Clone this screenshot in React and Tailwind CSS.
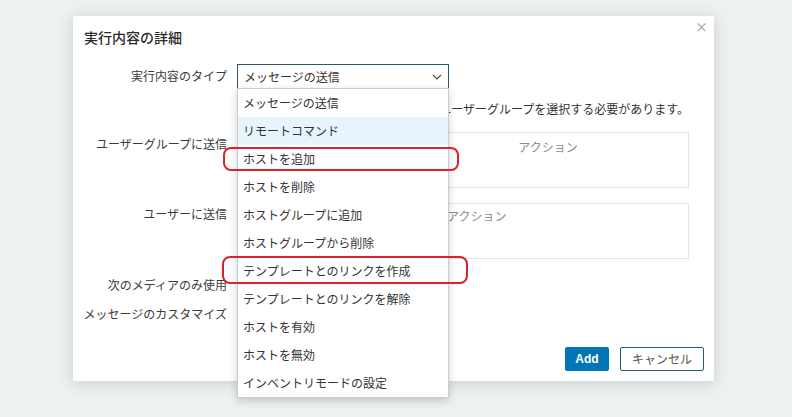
import React from 'react'

const options = [
  'メッセージの送信',
  'リモートコマンド',
  'ホストを追加',
  'ホストを削除',
  'ホストグループに追加',
  'ホストグループから削除',
  'テンプレートとのリンクを作成',
  'テンプレートとのリンクを解除',
  'ホストを有効',
  'ホストを無効',
  'インベントリモードの設定',
]

function Label({ children, className = '' }) {
  return <div className={`text-right text-[12px] leading-[16px] text-[#3b3b3b] ${className}`}>{children}</div>
}

function Chevron() {
  return (
    <svg viewBox="0 0 10 6" className="h-[6px] w-[10px]" fill="none" stroke="#4a4a4a" strokeWidth="1.1">
      <path d="M1 1l4 4 4-4" />
    </svg>
  )
}

export default function App() {
  return (
    <div
      className="relative h-[417px] w-[792px] overflow-hidden bg-[#eef1f1] pl-[73px] pt-[16px]"
      style={{ fontFamily: '"Noto Sans CJK JP", "Noto Sans", sans-serif' }}
    >
      <div className="relative h-[365px] w-[641px] bg-white shadow-[0_2px_14px_rgba(60,80,90,0.22)]">
        <button className="absolute right-[6px] top-[4px] text-[13px] leading-[14px] font-bold text-[#b4b4b4]">×</button>

        <div className="px-[11px] pt-[11px] text-[14px] font-medium leading-[20px] text-[#2b2b2b]">実行内容の詳細</div>

        <div className="mt-[17px] grid grid-cols-[154px_1fr] gap-x-[10px] pr-[25px]">
          <Label className="pt-[4px]">実行内容のタイプ</Label>
          <div className="relative z-10">
            <div className="flex h-[25px] w-[212px] items-center justify-between border border-[#2f5566] bg-white pl-[6px] pr-[6px] text-[12px] text-[#333]">
              <span>メッセージの送信</span>
              <Chevron />
            </div>
            <ul className="absolute left-0 top-[24px] w-[212px] border border-[#c9cdd0] bg-white shadow-[0_3px_8px_rgba(0,0,0,0.18)]">
              {options.map((o, i) => (
                <li
                  key={o}
                  className={`flex h-[28px] items-center pl-[5px] text-[12px] text-[#333] ${i === 1 ? 'bg-[#e8f4fb]' : ''}`}
                >
                  {o}
                </li>
              ))}
            </ul>
          </div>

          <div className="mt-[8px] h-[24px]" />
          <div className="mt-[8px] ml-[211px] flex h-[24px] items-center justify-end overflow-hidden whitespace-nowrap text-[12px] text-[#333]">
            ユーザーグループを選択する必要があります。
          </div>

          <Label className="mt-[11px] pt-[4px]">ユーザーグループに送信</Label>
          <div className="mt-[11px] flex h-[56px] border border-[#e3e5e6] text-[12px] text-[#8b8b8b]">
            <div className="w-[170px]" />
            <div className="flex-1 pt-[5px] text-center">アクション</div>
          </div>

          <Label className="mt-[15px] pt-[3px]">ユーザーに送信</Label>
          <div className="mt-[15px] flex h-[56px] border border-[#e3e5e6] text-[12px] text-[#8b8b8b]">
            <div className="w-[209px]" />
            <div className="flex-1 pt-[3px]">アクション</div>
          </div>

          <Label className="mt-[18px]">次のメディアのみ使用</Label>
          <div className="mt-[18px] h-[16px]" />

          <Label className="mt-[13px]">メッセージのカスタマイズ</Label>
          <div className="mt-[13px] h-[16px]" />
        </div>

        <div className="absolute bottom-[10px] right-[10px] flex gap-[11px]">
          <button className="h-[24px] w-[44px] rounded-[2px] bg-[#0275b8] text-[12px] font-bold text-white" style={{ fontFamily: '"Liberation Sans", Arial, sans-serif' }}>
            Add
          </button>
          <button className="h-[24px] w-[84px] rounded-[2px] border border-[#2c5a6e] bg-white text-[12px] text-[#555]">
            キャンセル
          </button>
        </div>
      </div>

      <div className="pointer-events-none absolute left-[223px] top-[147px] z-20 h-[24px] w-[236px] rounded-[8px] border-[2.5px] border-[#d9232e]" />
      <div className="pointer-events-none absolute left-[222px] top-[256px] z-20 h-[28px] w-[246px] rounded-[8px] border-[2.5px] border-[#d9232e]" />
    </div>
  )
}
